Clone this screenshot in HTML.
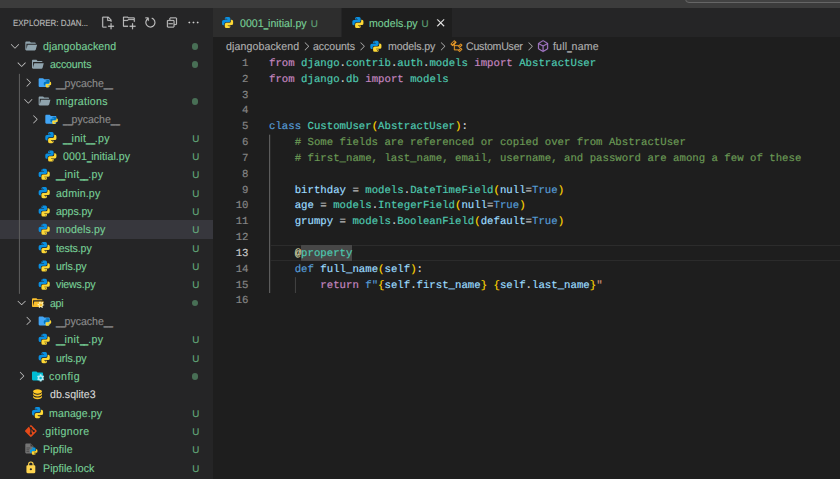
<!DOCTYPE html>
<html lang="en"><head><meta charset="utf-8"><title>models.py - djangobackend</title>
<style>
*{box-sizing:border-box}
html,body{margin:0;padding:0;background:#1e1e1e;overflow:hidden}
body{width:840px;height:479px;position:relative;font-family:"Liberation Sans",sans-serif;font-size:11.1px;color:#ccc;-webkit-text-stroke:.12px;text-rendering:geometricPrecision}
.top{position:absolute;left:0;top:0;width:840px;height:8px;background:#3c3c3c;overflow:hidden}
.topbox{position:absolute;left:685px;top:-10px;width:170px;height:12.5px;border:1px solid #666;border-radius:4px;background:#424242}
.side{position:absolute;left:0;top:8px;width:213px;height:471px;background:#252526}
.hdr{position:absolute;top:15px;line-height:16px;height:16px;font-size:9.17px;color:#bbb;white-space:nowrap;transform:scaleX(.868);transform-origin:0 0}
.row{position:absolute;left:0;width:213px;height:18.333px;line-height:18.333px;white-space:nowrap}
.row.sel{background:#37373d}
.nm{position:absolute;line-height:18px;height:18px;white-space:nowrap;transform:scaleX(.955);transform-origin:0 50%}
.u{display:inline-block;width:4.5px;transform:scaleX(.75);transform-origin:0 50%;letter-spacing:0;-webkit-text-stroke:.35px}
.g{color:#78d097} .i{color:#8c8c8c} .w{color:#d8d8d8}
.dot{position:absolute;left:191.5px;width:6.8px;height:6.8px;border-radius:50%;background:#73c991;opacity:.45}
.bu{position:absolute;left:192.2px;line-height:18px;height:18px;color:#73c991;font-size:9.8px;opacity:.8}
.guide{position:absolute;left:19px;top:73.83px;width:1px;height:220.00px;background:#585858}
.tabs{position:absolute;left:213px;top:8px;width:627px;height:29.17px;background:#252526}
.tabbg{position:absolute;top:8px;height:29.17px}
.lb{position:absolute;white-space:nowrap}
.tl,.bcl{transform:scaleX(.955);transform-origin:0 50%}
.tl{top:15px;height:18px;line-height:18px;color:#78d097}
.tu{top:16px;height:18px;line-height:18px;color:#73c991;font-size:9.8px;opacity:.75}
.bcl{top:38px;height:18px;line-height:18px;color:#b0b0b0}
.ln{position:absolute;left:213px;width:627px;height:16px;line-height:16px;font-family:"Liberation Mono",monospace;font-size:10.69px;white-space:pre;-webkit-text-stroke:.18px}
.no{position:absolute;top:0;left:0;width:35.5px;text-align:right;color:#858585}
.cur .no{color:#c6c6c6}
.cd{position:absolute;left:56px;top:0}
.k{color:#c586c0} .b{color:#569cd6} .t{color:#4ec9b0} .v{color:#9cdcfe} .f{color:#dcdcaa} .c{color:#6a9955} .s{color:#ce9178} .y{color:#ffd700} .cd .w{color:#d4d4d4}
.hlbox{position:absolute;left:301.1px;top:245px;width:51.2px;height:15.8px;background:#474747}
.ig{position:absolute;width:1px;background:#404040}
.icons{position:absolute;left:0;top:0;width:840px;height:479px;pointer-events:none}
</style></head><body>
<div class="top"><div class="topbox"></div></div>
<div class="side"></div>
<div class="hdr" id="hdr" style="left:12.80px;letter-spacing:0.000px;">EXPLORER: DJAN...</div>
<span class="nm g" id="r0" style="top:38px;left:42.64px;letter-spacing:0.116px;">djangobackend</span><span class="dot" style="top:42.92px"></span>
<span class="nm g" id="r1" style="top:56px;left:49.64px;letter-spacing:-0.141px;">accounts</span><span class="dot" style="top:61.25px"></span>
<span class="nm i" id="r2" style="top:75px;left:56.49px;letter-spacing:-0.046px;"><span class="u">_</span><span class="u">_</span>pycache<span class="u">_</span><span class="u">_</span></span>
<span class="nm g" id="r3" style="top:93px;left:56.08px;letter-spacing:0.309px;">migrations</span><span class="dot" style="top:97.92px"></span>
<span class="nm i" id="r4" style="top:111px;left:63.44px;letter-spacing:-0.046px;"><span class="u">_</span><span class="u">_</span>pycache<span class="u">_</span><span class="u">_</span></span>
<span class="nm g" id="r5" style="top:130px;left:63.33px;letter-spacing:0.274px;"><span class="u">_</span><span class="u">_</span>init<span class="u">_</span><span class="u">_</span>.py</span><span class="bu" style="top:131px">U</span>
<span class="nm g" id="r6" style="top:148px;left:62.88px;letter-spacing:0.077px;">0001<span class="u">_</span>initial.py</span><span class="bu" style="top:149px">U</span>
<span class="nm g" id="r7" style="top:166px;left:56.39px;letter-spacing:0.369px;"><span class="u">_</span><span class="u">_</span>init<span class="u">_</span><span class="u">_</span>.py</span><span class="bu" style="top:167px">U</span>
<span class="nm g" id="r8" style="top:185px;left:56.44px;letter-spacing:0.183px;">admin.py</span><span class="bu" style="top:186px">U</span>
<span class="nm g" id="r9" style="top:203px;left:56.32px;letter-spacing:-0.098px;">apps.py</span><span class="bu" style="top:204px">U</span>
<div class="row sel" style="top:220px;height:18.8px"></div>
<span class="nm g" id="r10" style="top:221px;left:56.32px;letter-spacing:0.143px;">models.py</span><span class="bu" style="top:222px">U</span>
<span class="nm g" id="r11" style="top:240px;left:56.30px;letter-spacing:-0.123px;">tests.py</span><span class="bu" style="top:241px">U</span>
<span class="nm g" id="r12" style="top:258px;left:56.22px;letter-spacing:-0.116px;">urls.py</span><span class="bu" style="top:259px">U</span>
<span class="nm g" id="r13" style="top:276px;left:56.36px;letter-spacing:-0.175px;">views.py</span><span class="bu" style="top:277px">U</span>
<span class="nm g" id="r14" style="top:295px;left:49.59px;letter-spacing:-0.302px;">api</span><span class="dot" style="top:299.58px"></span>
<span class="nm i" id="r15" style="top:313px;left:56.49px;letter-spacing:-0.046px;"><span class="u">_</span><span class="u">_</span>pycache<span class="u">_</span><span class="u">_</span></span>
<span class="nm g" id="r16" style="top:331px;left:56.39px;letter-spacing:0.369px;"><span class="u">_</span><span class="u">_</span>init<span class="u">_</span><span class="u">_</span>.py</span><span class="bu" style="top:332px">U</span>
<span class="nm g" id="r17" style="top:350px;left:56.22px;letter-spacing:-0.116px;">urls.py</span><span class="bu" style="top:351px">U</span>
<span class="nm g" id="r18" style="top:368px;left:49.44px;letter-spacing:0.479px;">config</span><span class="dot" style="top:372.92px"></span>
<span class="nm w" id="r19" style="top:386px;left:49.57px;letter-spacing:0.030px;">db.sqlite3</span>
<span class="nm g" id="r20" style="top:405px;left:49.25px;letter-spacing:0.096px;">manage.py</span><span class="bu" style="top:406px">U</span>
<span class="nm g" id="r21" style="top:423px;left:42.26px;letter-spacing:0.408px;">.gitignore</span><span class="bu" style="top:424px">U</span>
<span class="nm g" id="r22" style="top:441px;left:43.10px;letter-spacing:0.130px;">Pipfile</span><span class="bu" style="top:442px">U</span>
<span class="nm g" id="r23" style="top:460px;left:43.10px;letter-spacing:0.065px;">Pipfile.lock</span><span class="bu" style="top:461px">U</span>
<div class="tabs"></div>
<div class="tabbg" style="left:213px;width:128.2px;background:#2d2d2d"></div>
<div class="tabbg" style="left:341.5px;width:110.4px;background:#1e1e1e"></div>
<span class="lb tl" id="t1" style="left:239.75px;letter-spacing:0.040px;">0001<span class="u">_</span>initial.py</span>
<span class="lb tu" style="left:310.7px">U</span>
<span class="lb tl" id="t2" style="left:369.47px;letter-spacing:0.049px;">models.py</span>
<span class="lb tu" style="left:421.6px">U</span>
<span class="lb bcl" id="b1" style="left:225.82px;letter-spacing:0.113px;">djangobackend</span>
<span class="lb bcl" id="b2" style="left:313.46px;letter-spacing:-0.064px;">accounts</span>
<span class="lb bcl" id="b3" style="left:388.02px;letter-spacing:-0.118px;">models.py</span>
<span class="lb bcl" id="b4" style="left:465.70px;letter-spacing:-0.234px;">CustomUser</span>
<span class="lb bcl" id="b5" style="left:553.36px;letter-spacing:0.190px;">full<span class="u">_</span>name</span>
<div class="hlbox"></div>
<div class="ln" style="top:56px"><span class="no">1</span><span class="cd"><span class="k">from</span><span class="w"> </span><span class="t">django</span><span class="w">.</span><span class="t">contrib</span><span class="w">.</span><span class="t">auth</span><span class="w">.</span><span class="t">models</span><span class="w"> </span><span class="k">import</span><span class="w"> </span><span class="t">AbstractUser</span></span></div>
<div class="ln" style="top:72px"><span class="no">2</span><span class="cd"><span class="k">from</span><span class="w"> </span><span class="t">django</span><span class="w">.</span><span class="t">db</span><span class="w"> </span><span class="k">import</span><span class="w"> </span><span class="t">models</span></span></div>
<div class="ln" style="top:88px"><span class="no">3</span><span class="cd"></span></div>
<div class="ln" style="top:103px"><span class="no">4</span><span class="cd"></span></div>
<div class="ln" style="top:119px"><span class="no">5</span><span class="cd"><span class="b">class</span><span class="w"> </span><span class="t">CustomUser</span><span class="y">(</span><span class="t">AbstractUser</span><span class="y">)</span><span class="w">:</span></span></div>
<div class="ln" style="top:135px"><span class="no">6</span><span class="cd"><span class="w">    </span><span class="c"># Some fields are referenced or copied over from AbstractUser</span></span></div>
<div class="ln" style="top:151px"><span class="no">7</span><span class="cd"><span class="w">    </span><span class="c"># first_name, last_name, email, username, and password are among a few of these</span></span></div>
<div class="ln" style="top:167px"><span class="no">8</span><span class="cd"></span></div>
<div class="ln" style="top:183px"><span class="no">9</span><span class="cd"><span class="w">    </span><span class="v">birthday</span><span class="w"> = </span><span class="t">models</span><span class="w">.</span><span class="t">DateTimeField</span><span class="y">(</span><span class="v">null</span><span class="w">=</span><span class="b">True</span><span class="y">)</span></span></div>
<div class="ln" style="top:198px"><span class="no">10</span><span class="cd"><span class="w">    </span><span class="v">age</span><span class="w"> = </span><span class="t">models</span><span class="w">.</span><span class="t">IntegerField</span><span class="y">(</span><span class="v">null</span><span class="w">=</span><span class="b">True</span><span class="y">)</span></span></div>
<div class="ln" style="top:214px"><span class="no">11</span><span class="cd"><span class="w">    </span><span class="v">grumpy</span><span class="w"> = </span><span class="t">models</span><span class="w">.</span><span class="t">BooleanField</span><span class="y">(</span><span class="v">default</span><span class="w">=</span><span class="b">True</span><span class="y">)</span></span></div>
<div class="ln" style="top:230px"><span class="no">12</span><span class="cd"></span></div>
<div class="ln cur" style="top:246px"><span class="no">13</span><span class="cd"><span class="w">    </span><span class="f">@</span><span class="t">property</span></span></div>
<div class="ln" style="top:262px"><span class="no">14</span><span class="cd"><span class="w">    </span><span class="b">def</span><span class="w"> </span><span class="v">full_name</span><span class="y">(</span><span class="v">self</span><span class="y">)</span><span class="w">:</span></span></div>
<div class="ln" style="top:278px"><span class="no">15</span><span class="cd"><span class="w">        </span><span class="k">return</span><span class="w"> </span><span class="b">f"</span><span class="y">{</span><span class="v">self</span><span class="w">.</span><span class="v">first_name</span><span class="y">}</span><span class="s"> </span><span class="y">{</span><span class="v">self</span><span class="w">.</span><span class="v">last_name</span><span class="y">}</span><span class="s">"</span></span></div>
<div class="ln" style="top:293px"><span class="no">16</span><span class="cd"></span></div>
<svg class="icons" viewBox="0 0 840 479">
<g transform="translate(8.33 39.27) scale(0.83333)" fill="#c5c5c5" stroke="#c5c5c5" stroke-width="0"><path d="M7.976 10.072l4.357-4.357.62.618L8.284 11h-.618L3 6.333l.619-.618 4.357 4.357z"/></g>
<g transform="translate(24.20 39.27) scale(0.55556)"><path fill="#90a4ae" d="M19 20H4c-1.11 0-2-.9-2-2V6c0-1.11.89-2 2-2h6l2 2h7a2 2 0 0 1 2 2H4v10l2.14-8h17.07l-2.28 8.5c-.23.87-1.01 1.5-1.93 1.5z"/></g>
<g transform="translate(15.00 57.60) scale(0.83333)" fill="#c5c5c5" stroke="#c5c5c5" stroke-width="0"><path d="M7.976 10.072l4.357-4.357.62.618L8.284 11h-.618L3 6.333l.619-.618 4.357 4.357z"/></g>
<g transform="translate(30.87 57.60) scale(0.55556)"><path fill="#90a4ae" d="M19 20H4c-1.11 0-2-.9-2-2V6c0-1.11.89-2 2-2h6l2 2h7a2 2 0 0 1 2 2H4v10l2.14-8h17.07l-2.28 8.5c-.23.87-1.01 1.5-1.93 1.5z"/></g>
<g transform="translate(21.66 75.93) scale(0.83333)" fill="#c5c5c5" stroke="#c5c5c5" stroke-width="0"><path d="M10.072 8.024L5.715 3.667l.618-.62L11 7.716v.618L6.333 13l-.618-.619 4.357-4.357z"/></g>
<g transform="translate(37.53 75.93) scale(0.55556)"><path fill="#42a5f5" d="M10 4H4c-1.11 0-2 .89-2 2v12a2 2 0 0 0 2 2h16a2 2 0 0 0 2-2V8c0-1.11-.9-2-2-2h-8l-2-2z"/><g transform="translate(9.9 6) scale(.665)"><path fill="#0277bd" d="M9.86 2A2.86 2.86 0 0 0 7 4.86v1.68h4.29c.39 0 .71.57.71.96H4.86A2.86 2.86 0 0 0 2 10.36v3.781a2.86 2.86 0 0 0 2.86 2.86h1.18v-2.68a2.85 2.85 0 0 1 2.85-2.86h5.25c1.58 0 2.86-1.271 2.86-2.851V4.86A2.86 2.86 0 0 0 14.14 2zm-.72 1.61c.4 0 .72.12.72.71s-.32.891-.72.891c-.39 0-.71-.3-.71-.89s.32-.711.71-.711z"/><path fill="#fdd835" d="M17.959 7v2.68a2.85 2.85 0 0 1-2.85 2.859H9.86A2.85 2.85 0 0 0 7 15.389v3.75a2.86 2.86 0 0 0 2.86 2.86h4.28A2.86 2.86 0 0 0 17 19.14v-1.68h-4.291c-.39 0-.709-.57-.709-.96h7.14A2.86 2.86 0 0 0 22 13.64V9.86A2.86 2.86 0 0 0 19.14 7zm-3.099 11.789c.39 0 .71.3.71.89a.71.71 0 0 1-.71.71c-.4 0-.72-.12-.72-.71s.32-.89.72-.89z"/></g></g>
<g transform="translate(21.66 94.27) scale(0.83333)" fill="#c5c5c5" stroke="#c5c5c5" stroke-width="0"><path d="M7.976 10.072l4.357-4.357.62.618L8.284 11h-.618L3 6.333l.619-.618 4.357 4.357z"/></g>
<g transform="translate(37.53 94.27) scale(0.55556)"><path fill="#90a4ae" d="M19 20H4c-1.11 0-2-.9-2-2V6c0-1.11.89-2 2-2h6l2 2h7a2 2 0 0 1 2 2H4v10l2.14-8h17.07l-2.28 8.5c-.23.87-1.01 1.5-1.93 1.5z"/></g>
<g transform="translate(28.33 112.60) scale(0.83333)" fill="#c5c5c5" stroke="#c5c5c5" stroke-width="0"><path d="M10.072 8.024L5.715 3.667l.618-.62L11 7.716v.618L6.333 13l-.618-.619 4.357-4.357z"/></g>
<g transform="translate(44.20 112.60) scale(0.55556)"><path fill="#42a5f5" d="M10 4H4c-1.11 0-2 .89-2 2v12a2 2 0 0 0 2 2h16a2 2 0 0 0 2-2V8c0-1.11-.9-2-2-2h-8l-2-2z"/><g transform="translate(9.9 6) scale(.665)"><path fill="#0277bd" d="M9.86 2A2.86 2.86 0 0 0 7 4.86v1.68h4.29c.39 0 .71.57.71.96H4.86A2.86 2.86 0 0 0 2 10.36v3.781a2.86 2.86 0 0 0 2.86 2.86h1.18v-2.68a2.85 2.85 0 0 1 2.85-2.86h5.25c1.58 0 2.86-1.271 2.86-2.851V4.86A2.86 2.86 0 0 0 14.14 2zm-.72 1.61c.4 0 .72.12.72.71s-.32.891-.72.891c-.39 0-.71-.3-.71-.89s.32-.711.71-.711z"/><path fill="#fdd835" d="M17.959 7v2.68a2.85 2.85 0 0 1-2.85 2.859H9.86A2.85 2.85 0 0 0 7 15.389v3.75a2.86 2.86 0 0 0 2.86 2.86h4.28A2.86 2.86 0 0 0 17 19.14v-1.68h-4.291c-.39 0-.709-.57-.709-.96h7.14A2.86 2.86 0 0 0 22 13.64V9.86A2.86 2.86 0 0 0 19.14 7zm-3.099 11.789c.39 0 .71.3.71.89a.71.71 0 0 1-.71.71c-.4 0-.72-.12-.72-.71s.32-.89.72-.89z"/></g></g>
<g transform="translate(44.20 130.93) scale(0.55556)"><path fill="#0b8fe0" d="M9.86 2A2.86 2.86 0 0 0 7 4.86v1.68h4.29c.39 0 .71.57.71.96H4.86A2.86 2.86 0 0 0 2 10.36v3.781a2.86 2.86 0 0 0 2.86 2.86h1.18v-2.68a2.85 2.85 0 0 1 2.85-2.86h5.25c1.58 0 2.86-1.271 2.86-2.851V4.86A2.86 2.86 0 0 0 14.14 2zm-.72 1.61c.4 0 .72.12.72.71s-.32.891-.72.891c-.39 0-.71-.3-.71-.89s.32-.711.71-.711z"/><path fill="#fdd835" d="M17.959 7v2.68a2.85 2.85 0 0 1-2.85 2.859H9.86A2.85 2.85 0 0 0 7 15.389v3.75a2.86 2.86 0 0 0 2.86 2.86h4.28A2.86 2.86 0 0 0 17 19.14v-1.68h-4.291c-.39 0-.709-.57-.709-.96h7.14A2.86 2.86 0 0 0 22 13.64V9.86A2.86 2.86 0 0 0 19.14 7zm-3.099 11.789c.39 0 .71.3.71.89a.71.71 0 0 1-.71.71c-.4 0-.72-.12-.72-.71s.32-.89.72-.89z"/></g>
<g transform="translate(44.20 149.27) scale(0.55556)"><path fill="#0b8fe0" d="M9.86 2A2.86 2.86 0 0 0 7 4.86v1.68h4.29c.39 0 .71.57.71.96H4.86A2.86 2.86 0 0 0 2 10.36v3.781a2.86 2.86 0 0 0 2.86 2.86h1.18v-2.68a2.85 2.85 0 0 1 2.85-2.86h5.25c1.58 0 2.86-1.271 2.86-2.851V4.86A2.86 2.86 0 0 0 14.14 2zm-.72 1.61c.4 0 .72.12.72.71s-.32.891-.72.891c-.39 0-.71-.3-.71-.89s.32-.711.71-.711z"/><path fill="#fdd835" d="M17.959 7v2.68a2.85 2.85 0 0 1-2.85 2.859H9.86A2.85 2.85 0 0 0 7 15.389v3.75a2.86 2.86 0 0 0 2.86 2.86h4.28A2.86 2.86 0 0 0 17 19.14v-1.68h-4.291c-.39 0-.709-.57-.709-.96h7.14A2.86 2.86 0 0 0 22 13.64V9.86A2.86 2.86 0 0 0 19.14 7zm-3.099 11.789c.39 0 .71.3.71.89a.71.71 0 0 1-.71.71c-.4 0-.72-.12-.72-.71s.32-.89.72-.89z"/></g>
<g transform="translate(37.53 167.60) scale(0.55556)"><path fill="#0b8fe0" d="M9.86 2A2.86 2.86 0 0 0 7 4.86v1.68h4.29c.39 0 .71.57.71.96H4.86A2.86 2.86 0 0 0 2 10.36v3.781a2.86 2.86 0 0 0 2.86 2.86h1.18v-2.68a2.85 2.85 0 0 1 2.85-2.86h5.25c1.58 0 2.86-1.271 2.86-2.851V4.86A2.86 2.86 0 0 0 14.14 2zm-.72 1.61c.4 0 .72.12.72.71s-.32.891-.72.891c-.39 0-.71-.3-.71-.89s.32-.711.71-.711z"/><path fill="#fdd835" d="M17.959 7v2.68a2.85 2.85 0 0 1-2.85 2.859H9.86A2.85 2.85 0 0 0 7 15.389v3.75a2.86 2.86 0 0 0 2.86 2.86h4.28A2.86 2.86 0 0 0 17 19.14v-1.68h-4.291c-.39 0-.709-.57-.709-.96h7.14A2.86 2.86 0 0 0 22 13.64V9.86A2.86 2.86 0 0 0 19.14 7zm-3.099 11.789c.39 0 .71.3.71.89a.71.71 0 0 1-.71.71c-.4 0-.72-.12-.72-.71s.32-.89.72-.89z"/></g>
<g transform="translate(37.53 185.93) scale(0.55556)"><path fill="#0b8fe0" d="M9.86 2A2.86 2.86 0 0 0 7 4.86v1.68h4.29c.39 0 .71.57.71.96H4.86A2.86 2.86 0 0 0 2 10.36v3.781a2.86 2.86 0 0 0 2.86 2.86h1.18v-2.68a2.85 2.85 0 0 1 2.85-2.86h5.25c1.58 0 2.86-1.271 2.86-2.851V4.86A2.86 2.86 0 0 0 14.14 2zm-.72 1.61c.4 0 .72.12.72.71s-.32.891-.72.891c-.39 0-.71-.3-.71-.89s.32-.711.71-.711z"/><path fill="#fdd835" d="M17.959 7v2.68a2.85 2.85 0 0 1-2.85 2.859H9.86A2.85 2.85 0 0 0 7 15.389v3.75a2.86 2.86 0 0 0 2.86 2.86h4.28A2.86 2.86 0 0 0 17 19.14v-1.68h-4.291c-.39 0-.709-.57-.709-.96h7.14A2.86 2.86 0 0 0 22 13.64V9.86A2.86 2.86 0 0 0 19.14 7zm-3.099 11.789c.39 0 .71.3.71.89a.71.71 0 0 1-.71.71c-.4 0-.72-.12-.72-.71s.32-.89.72-.89z"/></g>
<g transform="translate(37.53 204.27) scale(0.55556)"><path fill="#0b8fe0" d="M9.86 2A2.86 2.86 0 0 0 7 4.86v1.68h4.29c.39 0 .71.57.71.96H4.86A2.86 2.86 0 0 0 2 10.36v3.781a2.86 2.86 0 0 0 2.86 2.86h1.18v-2.68a2.85 2.85 0 0 1 2.85-2.86h5.25c1.58 0 2.86-1.271 2.86-2.851V4.86A2.86 2.86 0 0 0 14.14 2zm-.72 1.61c.4 0 .72.12.72.71s-.32.891-.72.891c-.39 0-.71-.3-.71-.89s.32-.711.71-.711z"/><path fill="#fdd835" d="M17.959 7v2.68a2.85 2.85 0 0 1-2.85 2.859H9.86A2.85 2.85 0 0 0 7 15.389v3.75a2.86 2.86 0 0 0 2.86 2.86h4.28A2.86 2.86 0 0 0 17 19.14v-1.68h-4.291c-.39 0-.709-.57-.709-.96h7.14A2.86 2.86 0 0 0 22 13.64V9.86A2.86 2.86 0 0 0 19.14 7zm-3.099 11.789c.39 0 .71.3.71.89a.71.71 0 0 1-.71.71c-.4 0-.72-.12-.72-.71s.32-.89.72-.89z"/></g>
<g transform="translate(37.53 222.60) scale(0.55556)"><path fill="#0b8fe0" d="M9.86 2A2.86 2.86 0 0 0 7 4.86v1.68h4.29c.39 0 .71.57.71.96H4.86A2.86 2.86 0 0 0 2 10.36v3.781a2.86 2.86 0 0 0 2.86 2.86h1.18v-2.68a2.85 2.85 0 0 1 2.85-2.86h5.25c1.58 0 2.86-1.271 2.86-2.851V4.86A2.86 2.86 0 0 0 14.14 2zm-.72 1.61c.4 0 .72.12.72.71s-.32.891-.72.891c-.39 0-.71-.3-.71-.89s.32-.711.71-.711z"/><path fill="#fdd835" d="M17.959 7v2.68a2.85 2.85 0 0 1-2.85 2.859H9.86A2.85 2.85 0 0 0 7 15.389v3.75a2.86 2.86 0 0 0 2.86 2.86h4.28A2.86 2.86 0 0 0 17 19.14v-1.68h-4.291c-.39 0-.709-.57-.709-.96h7.14A2.86 2.86 0 0 0 22 13.64V9.86A2.86 2.86 0 0 0 19.14 7zm-3.099 11.789c.39 0 .71.3.71.89a.71.71 0 0 1-.71.71c-.4 0-.72-.12-.72-.71s.32-.89.72-.89z"/></g>
<g transform="translate(37.53 240.93) scale(0.55556)"><path fill="#0b8fe0" d="M9.86 2A2.86 2.86 0 0 0 7 4.86v1.68h4.29c.39 0 .71.57.71.96H4.86A2.86 2.86 0 0 0 2 10.36v3.781a2.86 2.86 0 0 0 2.86 2.86h1.18v-2.68a2.85 2.85 0 0 1 2.85-2.86h5.25c1.58 0 2.86-1.271 2.86-2.851V4.86A2.86 2.86 0 0 0 14.14 2zm-.72 1.61c.4 0 .72.12.72.71s-.32.891-.72.891c-.39 0-.71-.3-.71-.89s.32-.711.71-.711z"/><path fill="#fdd835" d="M17.959 7v2.68a2.85 2.85 0 0 1-2.85 2.859H9.86A2.85 2.85 0 0 0 7 15.389v3.75a2.86 2.86 0 0 0 2.86 2.86h4.28A2.86 2.86 0 0 0 17 19.14v-1.68h-4.291c-.39 0-.709-.57-.709-.96h7.14A2.86 2.86 0 0 0 22 13.64V9.86A2.86 2.86 0 0 0 19.14 7zm-3.099 11.789c.39 0 .71.3.71.89a.71.71 0 0 1-.71.71c-.4 0-.72-.12-.72-.71s.32-.89.72-.89z"/></g>
<g transform="translate(37.53 259.27) scale(0.55556)"><path fill="#0b8fe0" d="M9.86 2A2.86 2.86 0 0 0 7 4.86v1.68h4.29c.39 0 .71.57.71.96H4.86A2.86 2.86 0 0 0 2 10.36v3.781a2.86 2.86 0 0 0 2.86 2.86h1.18v-2.68a2.85 2.85 0 0 1 2.85-2.86h5.25c1.58 0 2.86-1.271 2.86-2.851V4.86A2.86 2.86 0 0 0 14.14 2zm-.72 1.61c.4 0 .72.12.72.71s-.32.891-.72.891c-.39 0-.71-.3-.71-.89s.32-.711.71-.711z"/><path fill="#fdd835" d="M17.959 7v2.68a2.85 2.85 0 0 1-2.85 2.859H9.86A2.85 2.85 0 0 0 7 15.389v3.75a2.86 2.86 0 0 0 2.86 2.86h4.28A2.86 2.86 0 0 0 17 19.14v-1.68h-4.291c-.39 0-.709-.57-.709-.96h7.14A2.86 2.86 0 0 0 22 13.64V9.86A2.86 2.86 0 0 0 19.14 7zm-3.099 11.789c.39 0 .71.3.71.89a.71.71 0 0 1-.71.71c-.4 0-.72-.12-.72-.71s.32-.89.72-.89z"/></g>
<g transform="translate(37.53 277.60) scale(0.55556)"><path fill="#0b8fe0" d="M9.86 2A2.86 2.86 0 0 0 7 4.86v1.68h4.29c.39 0 .71.57.71.96H4.86A2.86 2.86 0 0 0 2 10.36v3.781a2.86 2.86 0 0 0 2.86 2.86h1.18v-2.68a2.85 2.85 0 0 1 2.85-2.86h5.25c1.58 0 2.86-1.271 2.86-2.851V4.86A2.86 2.86 0 0 0 14.14 2zm-.72 1.61c.4 0 .72.12.72.71s-.32.891-.72.891c-.39 0-.71-.3-.71-.89s.32-.711.71-.711z"/><path fill="#fdd835" d="M17.959 7v2.68a2.85 2.85 0 0 1-2.85 2.859H9.86A2.85 2.85 0 0 0 7 15.389v3.75a2.86 2.86 0 0 0 2.86 2.86h4.28A2.86 2.86 0 0 0 17 19.14v-1.68h-4.291c-.39 0-.709-.57-.709-.96h7.14A2.86 2.86 0 0 0 22 13.64V9.86A2.86 2.86 0 0 0 19.14 7zm-3.099 11.789c.39 0 .71.3.71.89a.71.71 0 0 1-.71.71c-.4 0-.72-.12-.72-.71s.32-.89.72-.89z"/></g>
<g transform="translate(15.00 295.93) scale(0.83333)" fill="#c5c5c5" stroke="#c5c5c5" stroke-width="0"><path d="M7.976 10.072l4.357-4.357.62.618L8.284 11h-.618L3 6.333l.619-.618 4.357 4.357z"/></g>
<g transform="translate(30.87 295.93) scale(0.55556)"><path fill="#fbc02d" d="M19 20H4c-1.11 0-2-.9-2-2V6c0-1.11.89-2 2-2h6l2 2h7a2 2 0 0 1 2 2H4v10l2.14-8h17.07l-2.28 8.5c-.23.87-1.01 1.5-1.93 1.5z"/><g transform="translate(18 16)" fill="none" stroke="#fff9c4"><circle r="4.6" stroke-width="2.6" stroke-dasharray="2.2 2.62" stroke-dashoffset="1.1"/><circle r="3.3" stroke-width="1.3"/></g></g>
<g transform="translate(21.66 314.27) scale(0.83333)" fill="#c5c5c5" stroke="#c5c5c5" stroke-width="0"><path d="M10.072 8.024L5.715 3.667l.618-.62L11 7.716v.618L6.333 13l-.618-.619 4.357-4.357z"/></g>
<g transform="translate(37.53 314.27) scale(0.55556)"><path fill="#42a5f5" d="M10 4H4c-1.11 0-2 .89-2 2v12a2 2 0 0 0 2 2h16a2 2 0 0 0 2-2V8c0-1.11-.9-2-2-2h-8l-2-2z"/><g transform="translate(9.9 6) scale(.665)"><path fill="#0277bd" d="M9.86 2A2.86 2.86 0 0 0 7 4.86v1.68h4.29c.39 0 .71.57.71.96H4.86A2.86 2.86 0 0 0 2 10.36v3.781a2.86 2.86 0 0 0 2.86 2.86h1.18v-2.68a2.85 2.85 0 0 1 2.85-2.86h5.25c1.58 0 2.86-1.271 2.86-2.851V4.86A2.86 2.86 0 0 0 14.14 2zm-.72 1.61c.4 0 .72.12.72.71s-.32.891-.72.891c-.39 0-.71-.3-.71-.89s.32-.711.71-.711z"/><path fill="#fdd835" d="M17.959 7v2.68a2.85 2.85 0 0 1-2.85 2.859H9.86A2.85 2.85 0 0 0 7 15.389v3.75a2.86 2.86 0 0 0 2.86 2.86h4.28A2.86 2.86 0 0 0 17 19.14v-1.68h-4.291c-.39 0-.709-.57-.709-.96h7.14A2.86 2.86 0 0 0 22 13.64V9.86A2.86 2.86 0 0 0 19.14 7zm-3.099 11.789c.39 0 .71.3.71.89a.71.71 0 0 1-.71.71c-.4 0-.72-.12-.72-.71s.32-.89.72-.89z"/></g></g>
<g transform="translate(37.53 332.60) scale(0.55556)"><path fill="#0b8fe0" d="M9.86 2A2.86 2.86 0 0 0 7 4.86v1.68h4.29c.39 0 .71.57.71.96H4.86A2.86 2.86 0 0 0 2 10.36v3.781a2.86 2.86 0 0 0 2.86 2.86h1.18v-2.68a2.85 2.85 0 0 1 2.85-2.86h5.25c1.58 0 2.86-1.271 2.86-2.851V4.86A2.86 2.86 0 0 0 14.14 2zm-.72 1.61c.4 0 .72.12.72.71s-.32.891-.72.891c-.39 0-.71-.3-.71-.89s.32-.711.71-.711z"/><path fill="#fdd835" d="M17.959 7v2.68a2.85 2.85 0 0 1-2.85 2.859H9.86A2.85 2.85 0 0 0 7 15.389v3.75a2.86 2.86 0 0 0 2.86 2.86h4.28A2.86 2.86 0 0 0 17 19.14v-1.68h-4.291c-.39 0-.709-.57-.709-.96h7.14A2.86 2.86 0 0 0 22 13.64V9.86A2.86 2.86 0 0 0 19.14 7zm-3.099 11.789c.39 0 .71.3.71.89a.71.71 0 0 1-.71.71c-.4 0-.72-.12-.72-.71s.32-.89.72-.89z"/></g>
<g transform="translate(37.53 350.93) scale(0.55556)"><path fill="#0b8fe0" d="M9.86 2A2.86 2.86 0 0 0 7 4.86v1.68h4.29c.39 0 .71.57.71.96H4.86A2.86 2.86 0 0 0 2 10.36v3.781a2.86 2.86 0 0 0 2.86 2.86h1.18v-2.68a2.85 2.85 0 0 1 2.85-2.86h5.25c1.58 0 2.86-1.271 2.86-2.851V4.86A2.86 2.86 0 0 0 14.14 2zm-.72 1.61c.4 0 .72.12.72.71s-.32.891-.72.891c-.39 0-.71-.3-.71-.89s.32-.711.71-.711z"/><path fill="#fdd835" d="M17.959 7v2.68a2.85 2.85 0 0 1-2.85 2.859H9.86A2.85 2.85 0 0 0 7 15.389v3.75a2.86 2.86 0 0 0 2.86 2.86h4.28A2.86 2.86 0 0 0 17 19.14v-1.68h-4.291c-.39 0-.709-.57-.709-.96h7.14A2.86 2.86 0 0 0 22 13.64V9.86A2.86 2.86 0 0 0 19.14 7zm-3.099 11.789c.39 0 .71.3.71.89a.71.71 0 0 1-.71.71c-.4 0-.72-.12-.72-.71s.32-.89.72-.89z"/></g>
<g transform="translate(15.00 369.27) scale(0.83333)" fill="#c5c5c5" stroke="#c5c5c5" stroke-width="0"><path d="M10.072 8.024L5.715 3.667l.618-.62L11 7.716v.618L6.333 13l-.618-.619 4.357-4.357z"/></g>
<g transform="translate(30.87 369.27) scale(0.55556)"><path fill="#00bcd4" d="M10 4H4c-1.11 0-2 .89-2 2v12a2 2 0 0 0 2 2h16a2 2 0 0 0 2-2V8c0-1.11-.9-2-2-2h-8l-2-2z"/><g transform="translate(9.75 7.8) scale(.65)"><path fill="#b2ebf2" d="M12 15.5A3.5 3.5 0 0 1 8.5 12 3.5 3.5 0 0 1 12 8.500a3.5 3.5 0 0 1 3.5 3.5 3.5 3.5 0 0 1-3.5 3.5m7.43-2.53c.04-.32.07-.64.07-.97 0-.33-.03-.66-.07-1l2.110-1.630c.19-.15.24-.42.12-.64l-2-3.460c-.12-.22-.39-.31-.61-.22l-2.490 1c-.52-.39-1.060-.73-1.690-.98l-.37-2.650A.506.506 0 0 0 14 2h-4c-.25 0-.46.18-.5.42l-.37 2.650c-.63.25-1.170.59-1.690.98l-2.490-1c-.22-.09-.49 0-.61.22l-2 3.460c-.13.22-.07.49.12.64L4.570 11c-.04.34-.07.67-.07 1 0 .33.03.65.07.97l-2.110 1.660c-.19.15-.25.42-.12.64l2 3.460c.12.22.39.3.61.22l2.490-1.010c.52.4 1.060.74 1.690.99l.37 2.650c.04.24.25.42.5.42h4c.25 0 .46-.18.5-.42l.37-2.650c.63-.26 1.170-.59 1.690-.99l2.490 1.010c.22.08.49 0 .61-.22l2-3.460c.12-.22.07-.49-.12-.64l-2.110-1.660z"/></g></g>
<g transform="translate(30.87 387.60) scale(0.55556)"><path fill="#ffca28" d="M12 3C7.58 3 4 4.79 4 7s3.58 4 8 4 8-1.79 8-4-3.58-4-8-4M4 9v3c0 2.210 3.580 4 8 4s8-1.790 8-4V9c0 2.210-3.580 4-8 4s-8-1.790-8-4m0 5v3c0 2.210 3.580 4 8 4s8-1.790 8-4v-3c0 2.210-3.580 4-8 4s-8-1.790-8-4z"/></g>
<g transform="translate(30.87 405.93) scale(0.55556)"><path fill="#0b8fe0" d="M9.86 2A2.86 2.86 0 0 0 7 4.86v1.68h4.29c.39 0 .71.57.71.96H4.86A2.86 2.86 0 0 0 2 10.36v3.781a2.86 2.86 0 0 0 2.86 2.86h1.18v-2.68a2.85 2.85 0 0 1 2.85-2.86h5.25c1.58 0 2.86-1.271 2.86-2.851V4.86A2.86 2.86 0 0 0 14.14 2zm-.72 1.61c.4 0 .72.12.72.71s-.32.891-.72.891c-.39 0-.71-.3-.71-.89s.32-.711.71-.711z"/><path fill="#fdd835" d="M17.959 7v2.68a2.85 2.85 0 0 1-2.85 2.859H9.86A2.85 2.85 0 0 0 7 15.389v3.75a2.86 2.86 0 0 0 2.86 2.86h4.28A2.86 2.86 0 0 0 17 19.14v-1.68h-4.291c-.39 0-.709-.57-.709-.96h7.14A2.86 2.86 0 0 0 22 13.64V9.86A2.86 2.86 0 0 0 19.14 7zm-3.099 11.789c.39 0 .71.3.71.89a.71.71 0 0 1-.71.71c-.4 0-.72-.12-.72-.71s.32-.89.72-.89z"/></g>
<g transform="translate(24.20 424.27) scale(0.55556)"><path transform="translate(-.6 -.4) scale(1.05)" fill="#e64a19" d="M2.6 10.59L8.38 4.800l1.690 1.700c-.24.85.15 1.780.93 2.230v5.540c-.6.340-1 .990-1 1.730a2 2 0 0 0 2 2 2 2 0 0 0 2-2c0-.740-.4-1.390-1-1.730V9.410l2.070 2.090c-.07.15-.07.32-.07.5a2 2 0 0 0 2 2 2 2 0 0 0 2-2 2 2 0 0 0-2-2c-.18 0-.35 0-.5.070L13.930 7.500a1.980 1.980 0 0 0-1.150-2.340c-.43-.16-.88-.2-1.280-.09L9.800 3.380l.79-.78c.78-.79 2.040-.79 2.820 0l7.990 7.990c.79.780.79 2.040 0 2.820l-7.990 7.990c-.78.790-2.040.790-2.820 0L2.600 13.410c-.79-.78-.79-2.040 0-2.820z"/></g>
<g transform="translate(24.20 442.60) scale(0.55556)"><path fill="#757575" d="M3.5 1.700h8.300l4.800 4.800v13H3.500a1.500 1.500 0 0 1-1.500-1.500v-14.800a1.500 1.500 0 0 1 1.500-1.500z"/><path fill="#3a3a3a" d="M11.300 1.700l5.300 5.300h-5.300z"/><path stroke="#3d3d3d" stroke-width="1.300" d="M4 9.700h7M4 13h5M4 16.300h5"/><g transform="translate(9.2 7.4) scale(.665)"><path fill="#039be5" d="M9.86 2A2.86 2.86 0 0 0 7 4.86v1.68h4.29c.39 0 .71.57.71.96H4.86A2.86 2.86 0 0 0 2 10.36v3.781a2.86 2.86 0 0 0 2.86 2.86h1.18v-2.68a2.85 2.85 0 0 1 2.85-2.86h5.25c1.58 0 2.86-1.271 2.86-2.851V4.86A2.86 2.86 0 0 0 14.14 2zm-.72 1.61c.4 0 .72.12.72.71s-.32.891-.72.891c-.39 0-.71-.3-.71-.89s.32-.711.71-.711z"/><path fill="#fdd835" d="M17.959 7v2.68a2.85 2.85 0 0 1-2.85 2.859H9.86A2.85 2.85 0 0 0 7 15.389v3.75a2.86 2.86 0 0 0 2.86 2.86h4.28A2.86 2.86 0 0 0 17 19.14v-1.68h-4.291c-.39 0-.709-.57-.709-.96h7.14A2.86 2.86 0 0 0 22 13.64V9.86A2.86 2.86 0 0 0 19.14 7zm-3.099 11.789c.39 0 .71.3.71.89a.71.71 0 0 1-.71.71c-.4 0-.72-.12-.72-.71s.32-.89.72-.89z"/></g></g>
<g transform="translate(24.20 460.93) scale(0.55556)"><path fill="#ffd54f" d="M12 17a2 2 0 0 0 2-2 2 2 0 0 0-2-2 2 2 0 0 0-2 2 2 2 0 0 0 2 2m6-9a2 2 0 0 1 2 2v10a2 2 0 0 1-2 2H6a2 2 0 0 1-2-2V10a2 2 0 0 1 2-2h1V6a5 5 0 0 1 5-5 5 5 0 0 1 5 5v2h1m-6-5a3 3 0 0 0-3 3v2h6V6a3 3 0 0 0-3-3z"/></g>
<g transform="translate(100.63 15.83) scale(0.83333)" fill="#cfcfcf" stroke="#cfcfcf" stroke-width="0.25"><path fill-rule="evenodd" d="M9.5 1.1l3.4 3.5.1.4v2h-1V6H8V2H3v11h4v1H2.5l-.5-.5v-12l.5-.5h6.7l.3.1zM9 2v3h2.9L9 2zm4 14h-1v-3H9v-1h3V9h1v3h3v1h-3v3z"/></g>
<g transform="translate(122.18 15.83) scale(0.83333)" fill="#cfcfcf" stroke="#cfcfcf" stroke-width="0.25"><path fill-rule="evenodd" d="M14.5 2H7.71l-.85-.85L6.51 1h-5l-.5.5v11l.5.5H7v-1H1.99V6h4.49l.35-.15.86-.86H14v1.5l-.001.51h1.011V2.5L14.5 2zm-.51 2h-6.5l-.35.15-.86.86H2v-3h4.29l.85.85.36.15H14l-.01.99zM13 16h-1v-3H9v-1h3V9h1v3h3v1h-3v3z"/></g>
<g transform="translate(143.73 15.83) scale(0.83333)" fill="#cfcfcf" stroke="#cfcfcf" stroke-width="0.25"><path fill-rule="evenodd" d="M4.681 3H2V2h3.5l.5.5V6H5V4a5 5 0 1 0 4.53-.761l.302-.954A6 6 0 1 1 4.681 3z"/></g>
<g transform="translate(165.28 15.83) scale(0.83333)" fill="#cfcfcf" stroke="#cfcfcf" stroke-width="0.25"><path d="M9 9H4v1h5V9z"/><path fill-rule="evenodd" d="M5 3l1-1h7l1 1v7l-1 1h-2v2l-1 1H3l-1-1V6l1-1h2V3zm1 2h4l1 1v4h2V3H6v2zm4 1H3v7h7V6z"/></g>
<g transform="translate(186.83 15.83) scale(0.83333)" fill="#cfcfcf" stroke="#cfcfcf" stroke-width="0.25"><path d="M4 8a1 1 0 1 1-2 0 1 1 0 0 1 2 0zm5 0a1 1 0 1 1-2 0 1 1 0 0 1 2 0zm5 0a1 1 0 1 1-2 0 1 1 0 0 1 2 0z"/></g>
<g transform="translate(220.90 15.88) scale(0.55556)"><path fill="#0b8fe0" d="M9.86 2A2.86 2.86 0 0 0 7 4.86v1.68h4.29c.39 0 .71.57.71.96H4.86A2.86 2.86 0 0 0 2 10.36v3.781a2.86 2.86 0 0 0 2.86 2.86h1.18v-2.68a2.85 2.85 0 0 1 2.85-2.86h5.25c1.58 0 2.86-1.271 2.86-2.851V4.86A2.86 2.86 0 0 0 14.14 2zm-.72 1.61c.4 0 .72.12.72.71s-.32.891-.72.891c-.39 0-.71-.3-.71-.89s.32-.711.71-.711z"/><path fill="#fdd835" d="M17.959 7v2.68a2.85 2.85 0 0 1-2.85 2.859H9.86A2.85 2.85 0 0 0 7 15.389v3.75a2.86 2.86 0 0 0 2.86 2.86h4.28A2.86 2.86 0 0 0 17 19.14v-1.68h-4.291c-.39 0-.709-.57-.709-.96h7.14A2.86 2.86 0 0 0 22 13.64V9.86A2.86 2.86 0 0 0 19.14 7zm-3.099 11.789c.39 0 .71.3.71.89a.71.71 0 0 1-.71.71c-.4 0-.72-.12-.72-.71s.32-.89.72-.89z"/></g>
<g transform="translate(351.20 15.88) scale(0.55556)"><path fill="#0b8fe0" d="M9.86 2A2.86 2.86 0 0 0 7 4.86v1.68h4.29c.39 0 .71.57.71.96H4.86A2.86 2.86 0 0 0 2 10.36v3.781a2.86 2.86 0 0 0 2.86 2.86h1.18v-2.68a2.85 2.85 0 0 1 2.85-2.86h5.25c1.58 0 2.86-1.271 2.86-2.851V4.86A2.86 2.86 0 0 0 14.14 2zm-.72 1.61c.4 0 .72.12.72.71s-.32.891-.72.891c-.39 0-.71-.3-.71-.89s.32-.711.71-.711z"/><path fill="#fdd835" d="M17.959 7v2.68a2.85 2.85 0 0 1-2.85 2.859H9.86A2.85 2.85 0 0 0 7 15.389v3.75a2.86 2.86 0 0 0 2.86 2.86h4.28A2.86 2.86 0 0 0 17 19.14v-1.68h-4.291c-.39 0-.709-.57-.709-.96h7.14A2.86 2.86 0 0 0 22 13.64V9.86A2.86 2.86 0 0 0 19.14 7zm-3.099 11.789c.39 0 .71.3.71.89a.71.71 0 0 1-.71.71c-.4 0-.72-.12-.72-.71s.32-.89.72-.89z"/></g>
<g transform="translate(434.03 16.13) scale(0.83333)" fill="#f0f0f0" stroke="#f0f0f0" stroke-width="0.35"><path fill-rule="evenodd" d="M8 8.707l3.646 3.647.708-.707L8.707 8l3.647-3.646-.707-.708L8 7.293 4.354 3.646l-.707.708L7.293 8l-3.646 3.646.707.708L8 8.707z"/></g>
<g transform="translate(299.84 39.65) scale(0.83333)" fill="#b0b0b0" stroke="#b0b0b0" stroke-width="0"><path d="M10.072 8.024L5.715 3.667l.618-.62L11 7.716v.618L6.333 13l-.618-.619 4.357-4.357z"/></g>
<g transform="translate(355.50 39.65) scale(0.83333)" fill="#b0b0b0" stroke="#b0b0b0" stroke-width="0"><path d="M10.072 8.024L5.715 3.667l.618-.62L11 7.716v.618L6.333 13l-.618-.619 4.357-4.357z"/></g>
<g transform="translate(436.00 39.65) scale(0.83333)" fill="#b0b0b0" stroke="#b0b0b0" stroke-width="0"><path d="M10.072 8.024L5.715 3.667l.618-.62L11 7.716v.618L6.333 13l-.618-.619 4.357-4.357z"/></g>
<g transform="translate(523.50 39.65) scale(0.83333)" fill="#b0b0b0" stroke="#b0b0b0" stroke-width="0"><path d="M10.072 8.024L5.715 3.667l.618-.62L11 7.716v.618L6.333 13l-.618-.619 4.357-4.357z"/></g>
<g transform="translate(369.20 39.55) scale(0.55556)"><path fill="#0b8fe0" d="M9.86 2A2.86 2.86 0 0 0 7 4.86v1.68h4.29c.39 0 .71.57.71.96H4.86A2.86 2.86 0 0 0 2 10.36v3.781a2.86 2.86 0 0 0 2.86 2.86h1.18v-2.68a2.85 2.85 0 0 1 2.85-2.86h5.25c1.58 0 2.86-1.271 2.86-2.851V4.86A2.86 2.86 0 0 0 14.14 2zm-.72 1.61c.4 0 .72.12.72.71s-.32.891-.72.891c-.39 0-.71-.3-.71-.89s.32-.711.71-.711z"/><path fill="#fdd835" d="M17.959 7v2.68a2.85 2.85 0 0 1-2.85 2.859H9.86A2.85 2.85 0 0 0 7 15.389v3.75a2.86 2.86 0 0 0 2.86 2.86h4.28A2.86 2.86 0 0 0 17 19.14v-1.68h-4.291c-.39 0-.709-.57-.709-.96h7.14A2.86 2.86 0 0 0 22 13.64V9.86A2.86 2.86 0 0 0 19.14 7zm-3.099 11.789c.39 0 .71.3.71.89a.71.71 0 0 1-.71.71c-.4 0-.72-.12-.72-.71s.32-.89.72-.89z"/></g>
<g transform="translate(449.90 39.55) scale(0.83333)" fill="#ee9d28" stroke="#ee9d28" stroke-width="0.3"><path d="M11.34 9.71h.71l2.67-2.67v-.71L13.38 5h-.7l-1.82 1.81h-5V5.56l1.86-1.85V3l-2-2H5L1 5v.71l2 2h.71l1.14-1.15v5.79l.5.5H10v.52l1.33 1.33h.71l2.67-2.67v-.71L13.37 10h-.7l-1.86 1.85h-5v-4H10v.48l1.34 1.38zm1.69-3.65l.63.63-2 2-.63-.63 2-2zm-8-4l1 1-2.970 3-1-1 2.970-3zm8 9l.63.63-2 2-.63-.63 2-2z"/></g>
<g transform="translate(536.40 39.55) scale(0.83333)" fill="#b180d7" stroke="#b180d7" stroke-width="0.3"><path d="M13.51 4l-5-3h-1l-5 3-.49.86v6l.49.85 5 3h1l5-3 .49-.85v-6L13.51 4zm-6 9.56l-4.5-2.700V5.700l4.500 2.450v5.410zM3.270 4.700l4.740-2.840 4.740 2.840-4.740 2.590L3.270 4.700zm9.740 6.160l-4.500 2.700V8.150l4.500-2.450v5.160z"/></g>
<rect x="269.0" y="134.67" width="1.2" height="158.33" fill="#5c5c5c"/>
<rect x="294.9" y="277.17" width="1.1" height="15.83" fill="#404040"/>
<rect x="270.3" y="245.05" width="30.8" height=".9" fill="#2e2e2e"/>
<rect x="352.3" y="245.05" width="488" height=".9" fill="#2e2e2e"/>
<rect x="270.3" y="259.95" width="30.8" height=".9" fill="#2e2e2e"/>
<rect x="352.3" y="259.95" width="488" height=".9" fill="#2e2e2e"/>
<rect x="18.9" y="73.83" width="1.1" height="220.00" fill="#5a5a5a"/>
</svg>
</body></html>
